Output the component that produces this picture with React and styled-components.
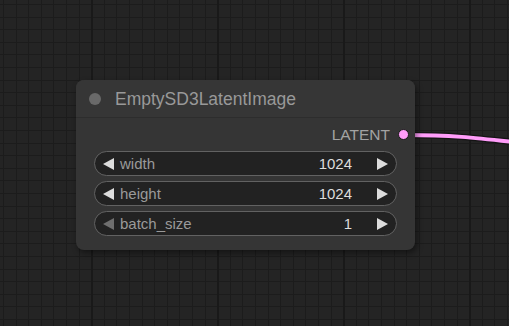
import React from "react";
import styled, { createGlobalStyle } from "styled-components";

const GlobalStyle = createGlobalStyle`
  html, body {
    margin: 0;
    padding: 0;
    background: #232323;
    font-family: "Liberation Sans", Arial, sans-serif;
  }
`;

const widgets = [
  { name: "width", value: "1024", atMin: false },
  { name: "height", value: "1024", atMin: false },
  { name: "batch_size", value: "1", atMin: true },
];

function LeftArrow({ dim }) {
  return (
    <ArrowIcon viewBox="0 0 11 12" $dim={dim}>
      <polygon points="0,6 11,0 11,12" />
    </ArrowIcon>
  );
}

function RightArrow() {
  return (
    <ArrowIcon viewBox="0 0 11 12">
      <polygon points="11,6 0,0 0,12" />
    </ArrowIcon>
  );
}

function App() {
  return (
    <>
      <GlobalStyle />
      <Canvas>
        <Link width="509" height="326" viewBox="0 0 509 326">
          <path d="M404 135 C 450 135, 470 137, 530 144" stroke="#141414" strokeWidth="6.5" fill="none" />
          <path d="M404 135 C 450 135, 470 137, 530 144" stroke="#ff9cf9" strokeWidth="4" fill="none" />
        </Link>
        <Node>
          <TitleBar>
            <TitleDot />
            <Title>EmptySD3LatentImage</Title>
          </TitleBar>
          <Body>
            <OutputRow>
              <SlotLabel>LATENT</SlotLabel>
              <SlotDot />
            </OutputRow>
            <WidgetList>
              {widgets.map((w) => (
                <Widget key={w.name}>
                  <LeftArrow dim={w.atMin} />
                  <Label>{w.name}</Label>
                  <Value>{w.value}</Value>
                  <RightArrow />
                </Widget>
              ))}
            </WidgetList>
          </Body>
        </Node>
      </Canvas>
    </>
  );
}

const Canvas = styled.div`
  position: relative;
  width: 509px;
  height: 326px;
  overflow: hidden;
  background-color: #242424;
  background-image:
    repeating-linear-gradient(90deg, transparent 0 91px, #191919 91px 93px, transparent 93px 126px),
    repeating-linear-gradient(90deg, transparent 0 3px, #1c1c1c 3px 4px, transparent 4px 12.6px),
    repeating-linear-gradient(180deg, transparent 0 4px, #1c1c1c 4px 5px, transparent 5px 12.6px);
`;

const Link = styled.svg`
  position: absolute;
  left: 0;
  top: 0;
`;

const Node = styled.div`
  position: absolute;
  left: 76px;
  top: 80px;
  width: 339px;
  display: flex;
  flex-direction: column;
  background: #353535;
  border-radius: 8px;
  box-shadow: 2px 3px 6px rgba(0, 0, 0, 0.45);
`;

const TitleBar = styled.div`
  display: flex;
  align-items: center;
  gap: 14px;
  height: 37px;
  padding-left: 13px;
  background: #363636;
  border-radius: 8px 8px 0 0;
  border-bottom: 1px solid #2d2d2d;
`;

const TitleDot = styled.span`
  width: 12px;
  height: 12px;
  border-radius: 50%;
  background: #696969;
`;

const Title = styled.span`
  font-size: 17.5px;
  color: #999999;
  padding-top: 1px;
`;

const Body = styled.div`
  display: flex;
  flex-direction: column;
  padding: 4px 18px 14px;
`;

const OutputRow = styled.div`
  display: flex;
  justify-content: flex-end;
  align-items: center;
  gap: 8px;
  height: 25px;
  margin-right: -12px;
  margin-bottom: 4px;
`;

const SlotLabel = styled.span`
  font-size: 15.5px;
  color: #a3a3a3;
`;

const SlotDot = styled.span`
  width: 9px;
  height: 9px;
  border-radius: 50%;
  background: #ff9cf9;
  border: 1px solid #1a1a1a;
`;

const WidgetList = styled.div`
  display: flex;
  flex-direction: column;
  gap: 5px;
`;

const Widget = styled.div`
  display: flex;
  align-items: center;
  height: 25px;
  box-sizing: border-box;
  padding: 0 8px;
  background: #222222;
  border: 1px solid #626262;
  border-radius: 13px;
  font-size: 15px;
`;

const ArrowIcon = styled.svg`
  width: 11px;
  height: 12px;
  flex: none;
  fill: ${(p) => (p.$dim ? "#6f6f6f" : "#dddddd")};
`;

const Label = styled.span`
  flex: 1;
  margin-left: 6px;
  color: #9a9a9a;
`;

const Value = styled.span`
  color: #dddddd;
  margin-right: 25px;
`;

export default App;
